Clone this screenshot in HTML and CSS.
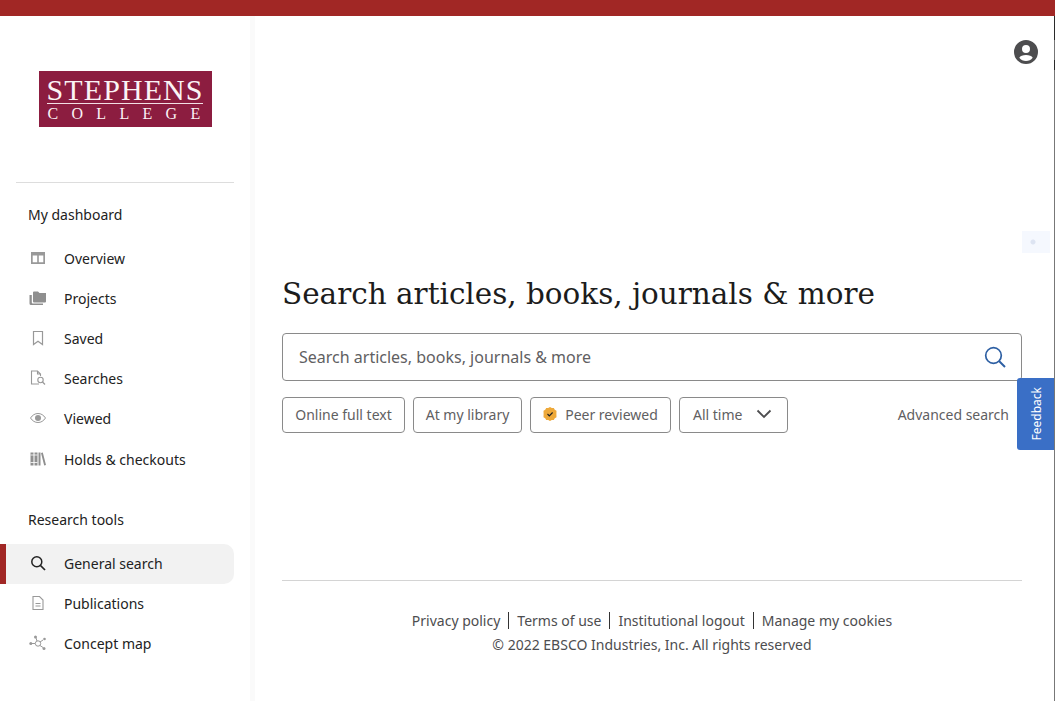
FILE: index.html
```html
<!DOCTYPE html>
<html lang="en">

<head>
    <title>Search</title>
    <meta charset="UTF-8" />
    <meta name="viewport" content="width=device-width, initial-scale=1.0" />
    <link rel="stylesheet" href="styles.css">
</head>

<body>
    <div class="topbar"></div>
    <div class="shell">
        <nav class="sidebar">
            <div class="logo-wrap">
                <div class="logo">
                    <div class="logo-name">STEPHENS</div>
                    <div class="logo-sub">COLLEGE</div>
                </div>
            </div>
            <div class="nav-group">
                <h2 class="nav-title">My dashboard</h2>
                <a class="nav-item">
                    <svg class="nav-icon" viewBox="0 0 16 16"><path fill="#999" fill-rule="evenodd" d="M1 2h14v12H1zM2.700 5.500v6.800h4.500V5.500zM8.800 5.500v6.800h4.500V5.500z"/></svg>
                    Overview
                </a>
                <a class="nav-item">
                    <svg class="nav-icon" viewBox="0 0 18 16"><path fill="#8f8f8f" d="M5 1.500h4l1.500 1.500H17v8.500a1 1 0 0 1-1 1H5a1 1 0 0 1-1-1V2.500a1 1 0 0 1 1-1z"/><path fill="#8f8f8f" d="M.5 5h2.300v7.500a1 1 0 0 0 1 1H14V15H2a1.500 1.500 0 0 1-1.500-1.500z"/></svg>
                    Projects
                </a>
                <a class="nav-item">
                    <svg class="nav-icon" viewBox="0 0 16 16"><path fill="none" stroke="#999" stroke-width="1.200" d="M3.500 1.500h9v13L8 11.200 3.500 14.500z"/></svg>
                    Saved
                </a>
                <a class="nav-item">
                    <svg class="nav-icon" viewBox="0 0 16 16"><path fill="none" stroke="#999" stroke-width="1.100" d="M9 14H1.500V1h6l3 3v2M7.500 1v3h3"/><circle cx="10.500" cy="10" r="2.700" fill="none" stroke="#999" stroke-width="1.100"/><path stroke="#999" stroke-width="1.200" d="M12.500 12l2.500 2.500"/></svg>
                    Searches
                </a>
                <a class="nav-item">
                    <svg class="nav-icon" viewBox="0 0 16 16"><path fill="none" stroke="#999" stroke-width="1" d="M.5 8C2.500 5 5 3.500 8 3.500S13.500 5 15.500 8c-2 3-4.500 4.500-7.500 4.500S2.500 11 .5 8z"/><circle cx="8" cy="8" r="3" fill="#999"/></svg>
                    Viewed
                </a>
                <a class="nav-item nav-item-last">
                    <svg class="nav-icon" viewBox="0 0 16 16"><path fill="#8f8f8f" d="M.5 1.500h3v13h-3zM4.500 1.500h3v13h-3zM8.500 1.500h2v13h-2zM11 2l1.800-.6 3.200 12.500-1.800.6z"/><path stroke="#fff" stroke-width=".8" d="M.5 4h7M.5 11.500h7"/></svg>
                    Holds &amp; checkouts
                </a>
            </div>
            <div class="nav-group nav-group-tools">
                <h2 class="nav-title">Research tools</h2>
                <a class="nav-item active">
                    <svg class="nav-icon" viewBox="0 0 16 16"><circle cx="6.800" cy="6.800" r="5" fill="none" stroke="#222" stroke-width="1.500"/><path stroke="#222" stroke-width="1.700" d="M10.500 10.500l4.500 4.500"/></svg>
                    General search
                </a>
                <a class="nav-item">
                    <svg class="nav-icon" viewBox="0 0 16 16"><path fill="none" stroke="#999" stroke-width="1.100" d="M3 1.500h6.500L13 5v9.500H3z"/><path stroke="#999" d="M5.500 8.500h5M5.500 11h5"/></svg>
                    Publications
                </a>
                <a class="nav-item">
                    <svg class="nav-icon" viewBox="0 0 18 16"><g fill="#999"><circle cx="1.800" cy="8.500" r="1.500"/><circle cx="6.500" cy="2" r="1.500"/><circle cx="15.500" cy="4" r="1.300"/><circle cx="15" cy="13.500" r="1.500"/></g><circle cx="9" cy="8.500" r="2.700" fill="none" stroke="#999"/><path stroke="#999" d="M3 8.500h3M7 3l1 3M11 7l3-2M11 10.500l3 2"/></svg>
                    Concept map
                </a>
            </div>
        </nav>

        <main class="content">
            <header class="account">
                <svg class="account-icon" viewBox="0 0 24 24"><path fill="#4d4d4f" fill-rule="evenodd" d="M12 0a12 12 0 1 1 0 24 12 12 0 0 1 0-24zm0 5a4 4 0 1 0 0 8 4 4 0 0 0 0-8zm0 10c-3.200 0-5.800 1.100-6.700 2.700A8.800 8.800 0 0 0 12 21a8.800 8.800 0 0 0 6.700-3.300C17.800 16.100 15.200 15 12 15z"/></svg>
            </header>
            <section class="search">
                <h1 class="search-title">Search articles, books, journals &amp; more</h1>
                <div class="search-box">
                    <span class="search-placeholder">Search articles, books, journals &amp; more</span>
                    <svg class="search-icon" viewBox="0 0 22 22"><circle cx="9.500" cy="9.500" r="7.800" fill="none" stroke="#2d5fa3" stroke-width="1.700"/><path stroke="#2d5fa3" stroke-width="2" d="M15 15l6 6"/></svg>
                </div>
                <div class="filters">
                    <button class="chip chip-fulltext" type="button">Online full text</button>
                    <button class="chip chip-library" type="button">At my library</button>
                    <button class="chip chip-peer" type="button">
                        <svg class="peer-icon" viewBox="0 0 14 14"><path fill="#eea93a" d="M7 0l1.800 1 2-.1 1 1.800 1.700 1.100L13.400 7l.1 3.200-1.700 1.100-1 1.800-2-.1L7 14l-1.800-1-2 .1-1-1.800L.5 10.200.6 7 .5 3.800l1.700-1.100 1-1.800 2 .1z"/><path fill="none" stroke="#222" stroke-width="1.200" d="M4.500 7l1.800 1.800 3.300-3.300"/></svg>
                        Peer reviewed
                    </button>
                    <button class="chip chip-select" type="button">
                        All time
                        <svg class="chevron" viewBox="0 0 16 10"><path fill="none" stroke="#4d4d4f" stroke-width="1.800" d="M1.500 1.500L8 8l6.500-6.500"/></svg>
                    </button>
                    <a class="advanced">Advanced search</a>
                </div>
            </section>
            <footer class="footer">
                <div class="footer-links">
                    <a>Privacy policy</a>
                    <a>Terms of use</a>
                    <a>Institutional logout</a>
                    <a>Manage my cookies</a>
                </div>
                <div class="copyright">© 2022 EBSCO Industries, Inc. All rights reserved</div>
            </footer>
        </main>
    </div>

    <div class="faint-box"></div>
    <button class="feedback" type="button"><span>Feedback</span></button>
    <div class="page-edge"></div>
</body>

</html>
```

FILE: styles.css
```css
* {
    box-sizing: border-box;
}

html,
body {
    height: 100%;
}

body {
    margin: 0;
    overflow: hidden;
    background: #fff;
    color: #222;
    font-family: "Noto Sans", sans-serif;
    font-size: 14px;
}

.topbar {
    height: 16px;
    background-color: #a12725;
}

.shell {
    display: flex;
    height: 685px;
}

/* sidebar */
.sidebar {
    width: 255px;
    flex-shrink: 0;
    border-right: 5px solid #fafafa;
}

.logo-wrap {
    display: flex;
    justify-content: center;
    height: 167px;
    margin: 0 16px;
    padding-top: 55px;
    border-bottom: 1px solid #ddd;
}

.logo {
    width: 173px;
    height: 56px;
    padding: 5px 0 0 8px;
    background-color: #8c1d40;
    color: #fbf3f5;
    font-family: "Liberation Serif", serif;
    white-space: nowrap;
}

.logo-name {
    width: 156px;
    font-size: 30px;
    line-height: 27px;
    letter-spacing: 1.100px;
    border-bottom: 1px solid #f3dfe4;
}

.logo-sub {
    padding-left: 1px;
    font-size: 16px;
    line-height: 19px;
    letter-spacing: 13.300px;
}

.nav-group {
    padding-top: 22px;
}

.nav-group-tools {
    padding-top: 30px;
}

.nav-title {
    margin: 0 0 14px 28px;
    height: 20px;
    line-height: 20px;
    font-size: 14px;
    font-weight: 400;
}

.nav-item {
    display: flex;
    align-items: center;
    gap: 17px;
    height: 40px;
    padding-left: 29px;
    padding-bottom: 2px;
    border-radius: 0 10px 10px 0;
}

.nav-item-last {
    height: 41px;
    padding-top: 1px;
}

.nav-icon {
    width: 18px;
    height: 16px;
    flex-shrink: 0;
}

.active {
    padding-left: 23px;
    width: 234px;
    border-left: 6px solid #a12725;
    background-color: #f2f2f2;
}

/* main column */
.content {
    flex: 1;
    min-width: 0;
    padding: 0 33px 0 27px;
    position: relative;
}

.account {
    display: flex;
    justify-content: flex-end;
    height: 254px;
    padding-top: 24px;
    margin-right: -16px;
}

.account-icon {
    width: 24px;
    height: 24px;
}

.search-title {
    margin: 0 0 15px 0;
    font-family: "DejaVu Serif", serif;
    font-size: 29.450px;
    line-height: 48px;
    font-weight: 400;
    color: #1c1c1c;
}

.search-box {
    display: flex;
    align-items: center;
    justify-content: space-between;
    height: 48px;
    padding: 0 15px 0 16px;
    border: 1px solid #8a8a8a;
    border-radius: 4px;
}

.search-placeholder {
    font-size: 16px;
    color: #5f6062;
}

.search-icon {
    width: 22px;
    height: 22px;
}

.filters {
    display: flex;
    align-items: center;
    gap: 8px;
    margin-top: 16px;
}

.chip {
    display: flex;
    align-items: center;
    justify-content: center;
    height: 36px;
    padding: 0 0 2px 0;
    border: 1px solid #8a8a8a;
    border-radius: 4px;
    background: #fff;
    color: #5f6062;
    font-family: inherit;
    font-size: 14px;
}

.chip-fulltext {
    width: 123px;
}

.chip-library {
    width: 109px;
}

.chip-peer {
    width: 141px;
}

.peer-icon {
    width: 14px;
    height: 14px;
    margin-right: 8px;
}

.chip-select {
    justify-content: flex-start;
    width: 109px;
    padding-left: 13px;
}

.chevron {
    width: 16px;
    height: 10px;
    margin-left: 14px;
}

.advanced {
    margin: 0 13px 2px auto;
    color: #5f6062;
}

.footer {
    margin-top: 147px;
    padding-top: 31px;
    border-top: 1px solid #d4d4d4;
    text-align: center;
    color: #4d4d4f;
}

.footer-links {
    display: flex;
    justify-content: center;
    line-height: 20px;
}

.footer-links a {
    padding: 0 8px;
    height: 17px;
    line-height: 17px;
    border-left: 1px solid #333;
}

.footer-links a:first-child {
    border-left: 0;
}

.copyright {
    margin-top: 6px;
    line-height: 20px;
}

/* things that float over the page */
.faint-box {
    position: fixed;
    left: 1022px;
    top: 231px;
    width: 28px;
    height: 22px;
    background: radial-gradient(circle at 11px 11px, #dde4f2 2px, #f5f8fe 3px);
}

.feedback {
    position: fixed;
    left: 1017px;
    top: 378px;
    width: 38px;
    height: 72px;
    display: flex;
    align-items: center;
    justify-content: center;
    padding: 0;
    border: 0;
    border-radius: 3px 0 0 3px;
    background-color: #3a6fc6;
    color: #fff;
    font-family: inherit;
    font-size: 12px;
}

.feedback span {
    writing-mode: vertical-rl;
    transform: rotate(180deg);
}

.page-edge {
    position: fixed;
    top: 16px;
    right: 0;
    bottom: 0;
    width: 1px;
    background: linear-gradient(#2a2a2a 24px, #777 24px, #777 44px, #2a2a2a 44px, #2a2a2a 54px, #777 54px);
}
```
